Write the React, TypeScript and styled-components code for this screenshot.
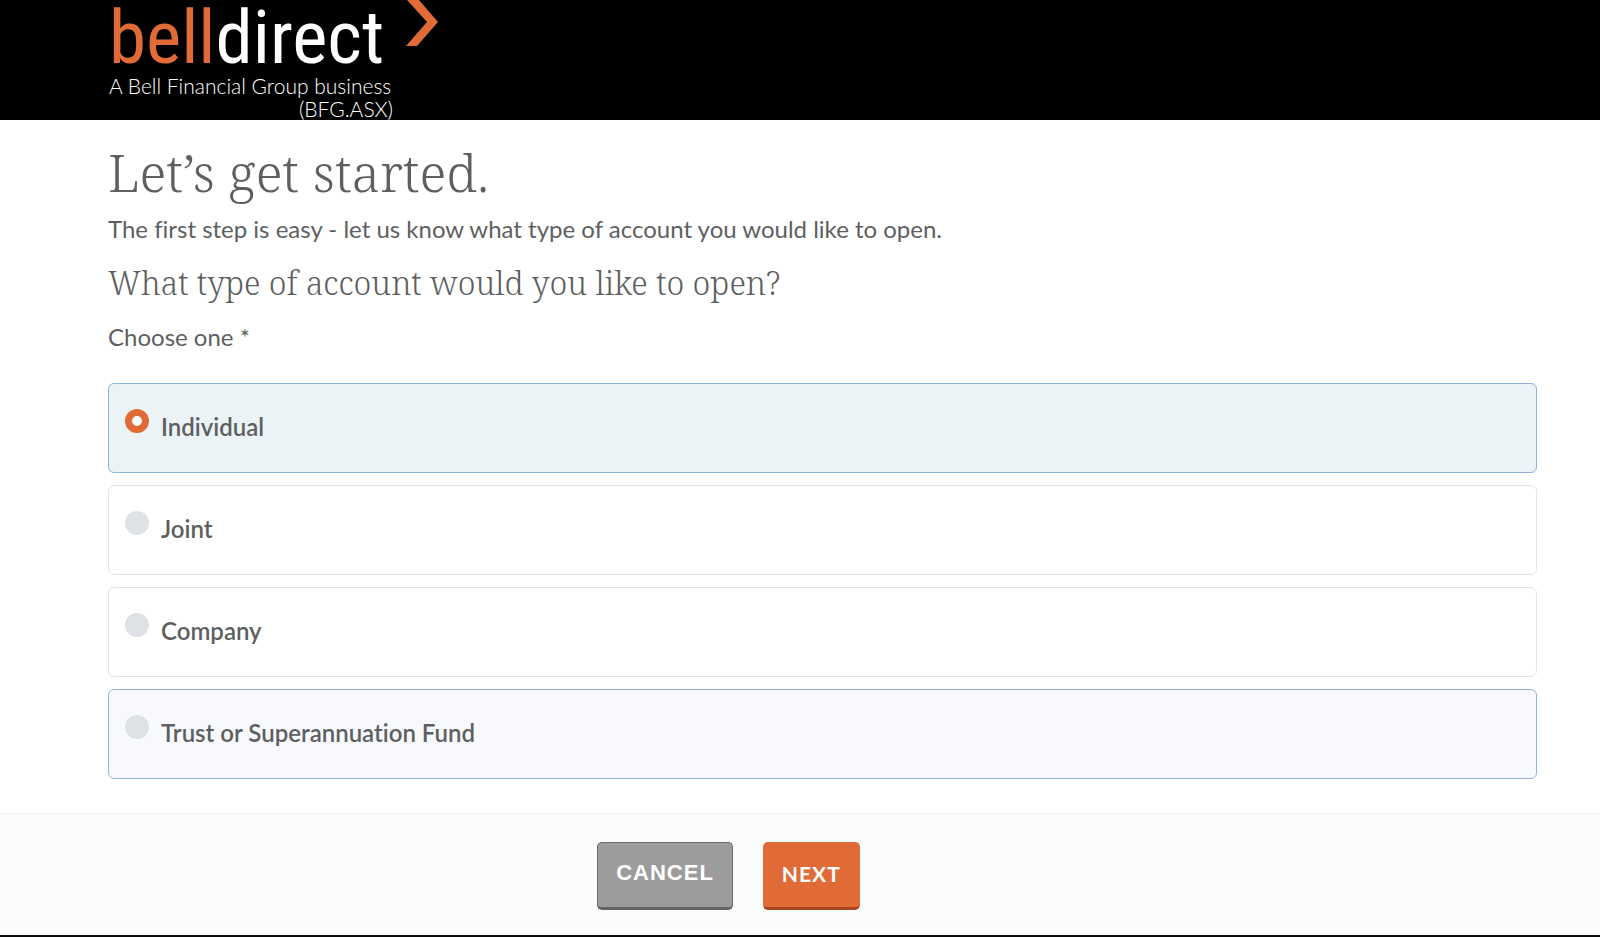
import React, { useState } from 'react';
import styled, { createGlobalStyle, css } from 'styled-components';

const orange = '#e06b36';
const ink = '#5e5f61';
const sans = `Lato, 'Liberation Sans', sans-serif`;
const slab = `'Noto Serif', 'DejaVu Serif', serif`;

const GlobalStyle = createGlobalStyle`
  *, *::before, *::after { box-sizing: border-box; }
  body {
    margin: 0;
    background: #fff;
    color: ${ink};
    font-family: ${sans};
    font-size: 24px;
    line-height: 32px;
    font-variant-ligatures: none;
  }
`;

const Page = styled.div`
  display: flex;
  flex-direction: column;
  min-height: 100vh;
`;

const Header = styled.header`
  display: flex;
  height: 120px;
  padding-left: 109px;
  background: #000;
`;

const LogoLink = styled.a`
  display: flex;
  align-items: flex-start;
  gap: 12px;
  color: #fff;
  text-decoration: none;
`;

const LogoText = styled.span`
  display: flex;
  flex-direction: column;
  width: 284px;
`;

const Wordmark = styled.span`
  font-family: 'Roboto Condensed', Roboto, sans-serif;
  font-size: 75px;
  font-weight: 400;
  line-height: 74px;
  white-space: nowrap;
`;

const WordmarkAccent = styled.span`
  color: ${orange};
`;

const Tagline = styled.span<{ $end?: boolean }>`
  font-size: 21px;
  font-weight: 300;
  line-height: 23px;
  white-space: nowrap;
  align-self: ${({ $end }) => ($end ? 'flex-end' : 'flex-start')};
`;

const Chevron = styled.svg`
  flex: none;
  width: 33px;
  height: 46px;
  fill: ${orange};
`;

const Main = styled.main`
  padding: 24px 63px 34px 108px;
`;

const Title = styled.h1`
  margin: 0;
  font-family: ${slab};
  font-size: 52px;
  font-weight: 300;
  line-height: 56px;
`;

const Intro = styled.p`
  margin: 13px 0 0;
`;

const Subtitle = styled.h2`
  margin: 16px 0 0;
  font-family: ${slab};
  font-size: 32px;
  font-weight: 300;
  line-height: 44px;
`;

const OptionGroup = styled.fieldset`
  display: flex;
  flex-direction: column;
  gap: 12px;
  min-width: 0;
  margin: 16px 0 0;
  padding: 0;
  border: 0;
`;

const Legend = styled.legend`
  padding: 0 0 30px;
`;

const OptionRow = styled.label<{ $tone: 'plain' | 'selected' | 'hovered' }>`
  display: flex;
  align-items: flex-start;
  gap: 12px;
  height: 90px;
  padding: 25px 16px;
  border: 1px solid #e3e4e5;
  border-radius: 6px;
  background: #fff;
  font-weight: 600;
  cursor: pointer;
  ${({ $tone }) =>
    $tone === 'selected' &&
    css`
      border-color: #8fb2d9;
      background: #ebf3f7;
    `}
  ${({ $tone }) =>
    $tone === 'hovered' &&
    css`
      border-color: #94b3d8;
      background: #f7f9fd;
    `}
`;

const Radio = styled.input`
  appearance: none;
  flex: none;
  width: 24px;
  height: 24px;
  margin: 0;
  border-radius: 50%;
  background: #dee1e5;
  cursor: pointer;
  &:checked {
    border: 7px solid ${orange};
    background: #fff;
  }
`;

const OptionText = styled.span`
  padding-top: 2px;
`;

const Footer = styled.footer`
  display: flex;
  flex: 1;
  justify-content: center;
  align-items: flex-start;
  gap: 30px;
  padding: 28px 143px 22px 0;
  border-top: 1px solid #f5f6f6;
  border-bottom: 2px solid #0b0b0d;
  background: #fafbfb;
`;

const Button = styled.button<{ $primary?: boolean }>`
  height: 68px;
  padding: 0 18px 4px;
  border: 1px solid #6b6b6b;
  border-bottom: 3px solid #636363;
  border-radius: 5px;
  background: #9c9c9c;
  color: #fff;
  font-family: 'Liberation Sans', Arial, sans-serif;
  font-size: 22px;
  font-weight: 700;
  letter-spacing: 1px;
  cursor: pointer;
  ${({ $primary }) =>
    $primary &&
    css`
      border-color: ${orange};
      border-bottom-color: #a8451c;
      background: ${orange};
      font-family: ${sans};
      font-size: 21px;
    `}
`;

const accountTypes = ['Individual', 'Joint', 'Company', 'Trust or Superannuation Fund'];

export default function App() {
  const [selected, setSelected] = useState('Individual');
  const [hovered, setHovered] = useState('Trust or Superannuation Fund');

  return (
    <Page>
      <GlobalStyle />
      <Header>
        <LogoLink href="#">
          <LogoText>
            <Wordmark>
              <WordmarkAccent>bell</WordmarkAccent>direct
            </Wordmark>
            <Tagline>A Bell Financial Group business</Tagline>
            <Tagline $end>(BFG.ASX)</Tagline>
          </LogoText>
          <Chevron viewBox="0 0 33 46" aria-hidden="true">
            <path d="M2 0H14L33 22L12 46H1L22 22Z" />
          </Chevron>
        </LogoLink>
      </Header>
      <Main>
        <Title>Let’s get started.</Title>
        <Intro>The first step is easy - let us know what type of account you would like to open.</Intro>
        <Subtitle>What type of account would you like to open?</Subtitle>
        <OptionGroup>
          <Legend>Choose one *</Legend>
          {accountTypes.map((type) => (
            <OptionRow
              key={type}
              $tone={type === selected ? 'selected' : type === hovered ? 'hovered' : 'plain'}
              onMouseEnter={() => setHovered(type)}
            >
              <Radio
                type="radio"
                name="accountType"
                value={type}
                checked={type === selected}
                onChange={() => setSelected(type)}
              />
              <OptionText>{type}</OptionText>
            </OptionRow>
          ))}
        </OptionGroup>
      </Main>
      <Footer>
        <Button type="button">CANCEL</Button>
        <Button type="button" $primary>NEXT</Button>
      </Footer>
    </Page>
  );
}
